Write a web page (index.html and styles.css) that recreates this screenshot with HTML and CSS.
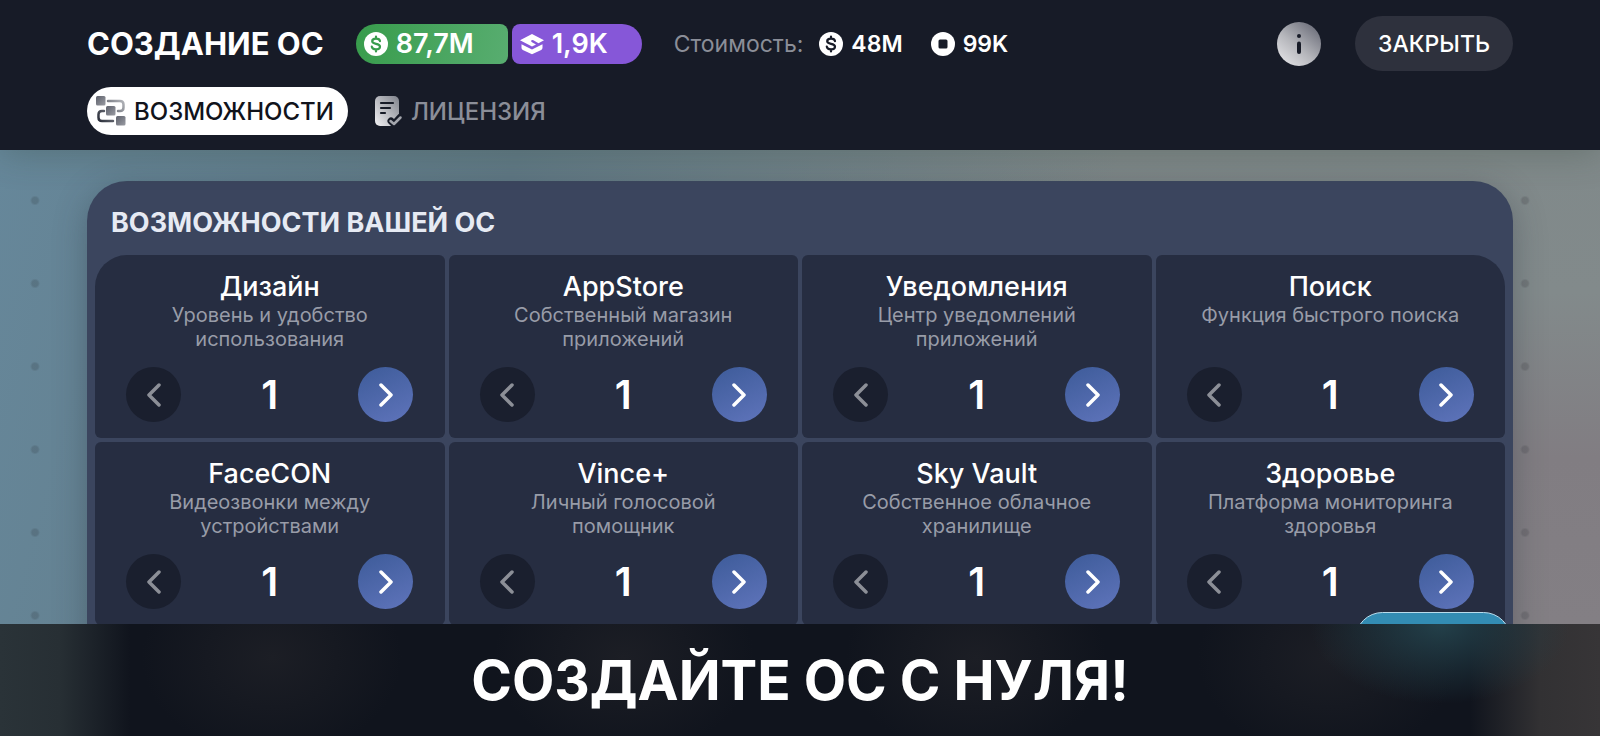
FILE: index.html
```
<!DOCTYPE html>
<html lang="ru">
<head>
    <meta charset="UTF-8">
    <meta name="viewport" content="width=device-width, initial-scale=1.0">
    <title>Создание ОС</title>
    <link rel="stylesheet" href="styles.css">
</head>
<body>
    <!-- Общие иконки -->
    <svg class="sprite" aria-hidden="true">
        <symbol id="dollar" viewBox="0 0 24 24">
            <circle cx="12" cy="12" r="12" fill="#fff"/>
            <path d="M16 9.2C15.8 7.600 14.300 6.700 12 6.700C9.700 6.700 8.200 7.700 8.200 9.300C8.200 13 16 10.800 16 14.700C16 16.300 14.400 17.300 12 17.300C9.600 17.300 8 16.300 7.800 14.600M12 4.600V6.700M12 17.300V19.400" fill="none" stroke="currentColor" stroke-width="2.200" stroke-linecap="round"/>
        </symbol>
        <symbol id="prev" viewBox="0 0 24 24">
            <path d="M17 2L7 12L17 22" fill="none" stroke="currentColor" stroke-width="3.500" stroke-linecap="round" stroke-linejoin="round"/>
        </symbol>
        <symbol id="next" viewBox="0 0 24 24">
            <path d="M7 2L17 12L7 22" fill="none" stroke="currentColor" stroke-width="3.500" stroke-linecap="round" stroke-linejoin="round"/>
        </symbol>
    </svg>

    <header class="header">
        <div class="top-row">
            <h1 class="title">СОЗДАНИЕ ОС</h1>
            <div class="balance">
                <span class="pill money"><svg class="coin"><use href="#dollar"/></svg>87,7M</span>
                <span class="pill science">
                    <svg class="coin" viewBox="0 0 24 24">
                        <path d="M12 2L24 8.200L18.500 11.200L13.400 8.300Q11.800 7.600 11.200 8.600Q10.800 9.600 12 10.200L16 12.500L12 14.600L0 8.200Z" fill="#fff"/>
                        <path d="M1.500 12.200L12 17.500L22.500 12.200V15.800Q22.500 17.200 21.200 17.900L12 22.300L2.800 17.900Q1.500 17.200 1.500 15.800Z" fill="#fff"/>
                    </svg>1,9K</span>
            </div>
            <div class="cost">
                <span class="cost-label">Стоимость:</span>
                <span class="cost-item"><svg class="coin"><use href="#dollar"/></svg>48M</span>
                <span class="cost-item">
                    <svg class="coin" viewBox="0 0 24 24">
                        <circle cx="12" cy="12" r="12" fill="#fff"/>
                        <rect x="7.500" y="7.500" width="9" height="9" rx="1.500" fill="#171b27"/>
                    </svg>99K</span>
            </div>
            <button class="info" type="button" aria-label="Информация">
                <svg viewBox="0 0 44 44">
                    <circle cx="22" cy="14" r="2" fill="#171b27"/>
                    <path d="M22 21.500V30" stroke="#171b27" stroke-width="4" stroke-linecap="round"/>
                </svg>
            </button>
            <button class="close" type="button">ЗАКРЫТЬ</button>
        </div>
        <nav class="tabs">
            <button class="tab active" type="button">
                <svg class="tab-icon" viewBox="0 0 30 30">
                    <defs>
                        <linearGradient id="sq" x1="0" y1="0" x2="1" y2="1"><stop offset="0" stop-color="#5d606b"/><stop offset="1" stop-color="#9a9ca3"/></linearGradient>
                        <linearGradient id="ln" gradientUnits="userSpaceOnUse" x1="2" y1="26" x2="28" y2="4"><stop offset="0" stop-color="#262a36"/><stop offset="1" stop-color="#b5b7bc"/></linearGradient>
                    </defs>
                    <path d="M12 5H24Q27.500 5 27.500 8.500V11.500Q27.500 15 24 15H22M8 15H6Q2.500 15 2.500 18.500V21.500Q2.500 25 6 25H17" fill="none" stroke="url(#ln)" stroke-width="2.500" stroke-linecap="round"/>
                    <rect x="0" y="0" width="9.500" height="9.500" rx="1.500" fill="url(#sq)"/>
                    <rect x="10" y="10" width="9.500" height="9.500" rx="1.500" fill="url(#sq)"/>
                    <rect x="20" y="20" width="9.500" height="9.500" rx="1.500" fill="url(#sq)"/>
                </svg>
                ВОЗМОЖНОСТИ
            </button>
            <button class="tab" type="button">
                <svg class="tab-icon" viewBox="0 0 30 30">
                    <defs>
                        <linearGradient id="doc" x1="0" y1="1" x2="1" y2="0"><stop offset="0" stop-color="#f2f2f4"/><stop offset="1" stop-color="#7f828b"/></linearGradient>
                    </defs>
                    <rect x="2" y="0" width="24" height="30" rx="5" fill="url(#doc)"/>
                    <path d="M8 7H20M8 12H17M8 17H12" stroke="#171b27" stroke-width="2.200" stroke-linecap="round"/>
                    <path d="M18 25L21 28L27 21.500" fill="none" stroke="#171b27" stroke-width="7" stroke-linecap="round" stroke-linejoin="round"/>
                    <path d="M17.500 25L21 28L27.500 21.500" fill="none" stroke="#a4a6ad" stroke-width="2.500" stroke-linecap="round" stroke-linejoin="round"/>
                </svg>
                ЛИЦЕНЗИЯ
            </button>
        </nav>
    </header>

    <main class="desk">
        <section class="panel">
            <h2 class="panel-title">ВОЗМОЖНОСТИ ВАШЕЙ ОС</h2>
            <div class="grid">
                <article class="card">
                    <h3>Дизайн</h3>
                    <p>Уровень и удобство использования</p>
                    <div class="stepper">
                        <button class="step" type="button" aria-label="Меньше" disabled><svg><use href="#prev"/></svg></button>
                        <output>1</output>
                        <button class="step up" type="button" aria-label="Больше"><svg><use href="#next"/></svg></button>
                    </div>
                </article>
                <article class="card">
                    <h3>AppStore</h3>
                    <p>Собственный магазин приложений</p>
                    <div class="stepper">
                        <button class="step" type="button" aria-label="Меньше" disabled><svg><use href="#prev"/></svg></button>
                        <output>1</output>
                        <button class="step up" type="button" aria-label="Больше"><svg><use href="#next"/></svg></button>
                    </div>
                </article>
                <article class="card">
                    <h3>Уведомления</h3>
                    <p>Центр уведомлений приложений</p>
                    <div class="stepper">
                        <button class="step" type="button" aria-label="Меньше" disabled><svg><use href="#prev"/></svg></button>
                        <output>1</output>
                        <button class="step up" type="button" aria-label="Больше"><svg><use href="#next"/></svg></button>
                    </div>
                </article>
                <article class="card">
                    <h3>Поиск</h3>
                    <p>Функция быстрого поиска</p>
                    <div class="stepper">
                        <button class="step" type="button" aria-label="Меньше" disabled><svg><use href="#prev"/></svg></button>
                        <output>1</output>
                        <button class="step up" type="button" aria-label="Больше"><svg><use href="#next"/></svg></button>
                    </div>
                </article>
                <article class="card">
                    <h3>FaceCON</h3>
                    <p>Видеозвонки между устройствами</p>
                    <div class="stepper">
                        <button class="step" type="button" aria-label="Меньше" disabled><svg><use href="#prev"/></svg></button>
                        <output>1</output>
                        <button class="step up" type="button" aria-label="Больше"><svg><use href="#next"/></svg></button>
                    </div>
                </article>
                <article class="card">
                    <h3>Vince+</h3>
                    <p>Личный голосовой помощник</p>
                    <div class="stepper">
                        <button class="step" type="button" aria-label="Меньше" disabled><svg><use href="#prev"/></svg></button>
                        <output>1</output>
                        <button class="step up" type="button" aria-label="Больше"><svg><use href="#next"/></svg></button>
                    </div>
                </article>
                <article class="card">
                    <h3>Sky Vault</h3>
                    <p>Собственное облачное хранилище</p>
                    <div class="stepper">
                        <button class="step" type="button" aria-label="Меньше" disabled><svg><use href="#prev"/></svg></button>
                        <output>1</output>
                        <button class="step up" type="button" aria-label="Больше"><svg><use href="#next"/></svg></button>
                    </div>
                </article>
                <article class="card">
                    <h3>Здоровье</h3>
                    <p>Платформа мониторинга здоровья</p>
                    <div class="stepper">
                        <button class="step" type="button" aria-label="Меньше" disabled><svg><use href="#prev"/></svg></button>
                        <output>1</output>
                        <button class="step up" type="button" aria-label="Больше"><svg><use href="#next"/></svg></button>
                    </div>
                </article>
            </div>
        </section>
        <button class="float-btn" type="button" aria-label="Далее"></button>
    </main>

    <footer class="banner">
        <p>СОЗДАЙТЕ ОС С НУЛЯ!</p>
    </footer>
</body>
</html>
```
FILE: styles.css
```
* {
    box-sizing: border-box;
}
body {
    --side: 87px;
    margin: 0;
    height: 100vh;
    display: flex;
    flex-direction: column;
    overflow: hidden;
    font-family: Inter, "Noto Sans", sans-serif;
    color: #fff;
    background: #171b27;
}
h1, h2, h3, p {
    margin: 0;
}
button {
    font: inherit;
    color: inherit;
    border: none;
    padding: 0;
    cursor: pointer;
}
.sprite {
    position: absolute;
    width: 0;
    height: 0;
}

/* Шапка */
.header {
    position: relative;
    z-index: 1;
    flex: none;
    padding: 16px var(--side) 15px;
    background: #171b27;
    box-shadow: 0 4px 32px rgba(50, 70, 55, 0.3);
}
.top-row {
    display: flex;
    align-items: center;
    height: 55px;
}
.title {
    font-size: 31px;
    font-weight: 700;
    white-space: nowrap;
}
.balance {
    display: flex;
    gap: 4px;
    margin-left: 32px;
}
.pill {
    display: flex;
    align-items: center;
    gap: 8px;
    height: 40px;
    padding: 0 34px 0 8px;
    font-size: 27px;
    font-weight: 600;
}
.money {
    color: #fff;
    background: linear-gradient(100deg, #389c4c, #58ad70);
    border-radius: 20px 8px 8px 20px;
}
.money .coin {
    color: #389c4c;
}
.science {
    background: #8657d8;
    border-radius: 8px 20px 20px 8px;
}
.coin {
    width: 24px;
    height: 24px;
    flex: none;
}
.cost {
    display: flex;
    align-items: center;
    gap: 28px;
    margin-left: 32px;
    font-size: 23px;
}
.cost-label {
    color: #8b8e98;
    margin-right: -12px;
}
.cost-item {
    display: flex;
    align-items: center;
    gap: 8px;
    font-weight: 600;
}
.cost-item .coin {
    color: #171b27;
}
.info {
    width: 44px;
    height: 44px;
    margin-left: auto;
    border-radius: 50%;
    background: linear-gradient(40deg, #e0e0e3 10%, #b5b6bb 45%, #6c6e7a 90%);
}
.info svg {
    display: block;
}
.close {
    height: 55px;
    margin-left: 34px;
    padding: 0 23px;
    border-radius: 28px;
    background: #2e313d;
    font-size: 23px;
    font-weight: 500;
}
.tabs {
    display: flex;
    gap: 16px;
    margin-top: 16px;
}
.tab {
    display: flex;
    align-items: center;
    gap: 8px;
    height: 48px;
    padding: 0 14px 0 9px;
    border-radius: 24px;
    background: none;
    color: #8b8e98;
    font-size: 24px;
    font-weight: 500;
}
.tab.active {
    background: #fff;
    color: #11131b;
}
.tab-icon {
    width: 30px;
    height: 30px;
}

/* Рабочая область с точками по краям */
.desk {
    position: relative;
    flex: 1;
    min-height: 0;
    overflow: hidden;
    padding: 31px var(--side) 0;
    background:
        radial-gradient(circle, rgba(60, 75, 85, 0.3) 3px, transparent 5px) left 30px top 9px / 10px 83px repeat-y,
        radial-gradient(circle, rgba(75, 75, 80, 0.3) 3px, transparent 5px) right 70px top 9px / 10px 83px repeat-y,
        linear-gradient(105deg, #66879a, #627b87 30%, transparent 65%),
        linear-gradient(#80898a, #828a8b 30%, #817d82 65%, #837f84);
}
.panel {
    padding: 0 8px 48px;
    border-radius: 40px;
    background: #3b455e;
    box-shadow: 0 8px 32px rgba(40, 50, 60, 0.35);
}
.panel-title {
    padding: 26px 16px 16px;
    font-size: 27px;
    line-height: 32px;
    font-weight: 700;
    color: #e6eaf3;
}
.grid {
    display: grid;
    grid-template-columns: repeat(4, 1fr);
    gap: 4px;
}
.card {
    display: flex;
    flex-direction: column;
    height: 183px;
    padding: 16px 31px;
    border-radius: 6px;
    background: #262d41;
    text-align: center;
}
.card:first-child {
    border-top-left-radius: 32px;
}
.card:nth-child(4) {
    border-top-right-radius: 32px;
}
.card h3 {
    font-size: 27px;
    line-height: 32px;
    font-weight: 500;
}
.card p {
    padding: 0 8px;
    font-size: 20px;
    line-height: 24px;
    color: #989ca8;
}
.stepper {
    display: flex;
    justify-content: space-between;
    align-items: center;
    margin-top: auto;
}
.stepper output {
    font-size: 40px;
    line-height: 48px;
    font-weight: 600;
}
.step {
    display: grid;
    place-items: center;
    width: 55px;
    height: 55px;
    border-radius: 50%;
    background: #1a1f2e;
    color: #8c8f97;
}
.step svg {
    width: 24px;
    height: 24px;
}
.step.up {
    background: linear-gradient(155deg, #3d5b99, #5f74bb);
    color: #fff;
}
/* Плавающая кнопка, выглядывает из-под баннера */
.float-btn {
    position: absolute;
    right: 89px;
    bottom: -43px;
    width: 156px;
    height: 55px;
    border: 1px solid #b9dcec;
    border-radius: 28px;
    background: #338cb3;
}

/* Нижний баннер */
.banner {
    flex: none;
    height: 112px;
    display: flex;
    align-items: center;
    justify-content: center;
    background:
        radial-gradient(ellipse 130px 80px at right 160px top 0, #23404a, transparent),
        linear-gradient(90deg, #2a3338, #272f34 60px, transparent 130px),
        linear-gradient(270deg, #373537, #323133 60px, transparent 130px),
        radial-gradient(ellipse 130px 100px at 17% 30%, #1c1e25, transparent),
        radial-gradient(ellipse 130px 100px at 39% 30%, #1c1e25, transparent),
        radial-gradient(ellipse 130px 100px at 61% 30%, #1c1e25, transparent),
        radial-gradient(ellipse 130px 100px at 83% 30%, #1c1e25, transparent),
        #10141d;
}
.banner p {
    font-size: 55px;
    line-height: 64px;
    font-weight: 700;
}
```
